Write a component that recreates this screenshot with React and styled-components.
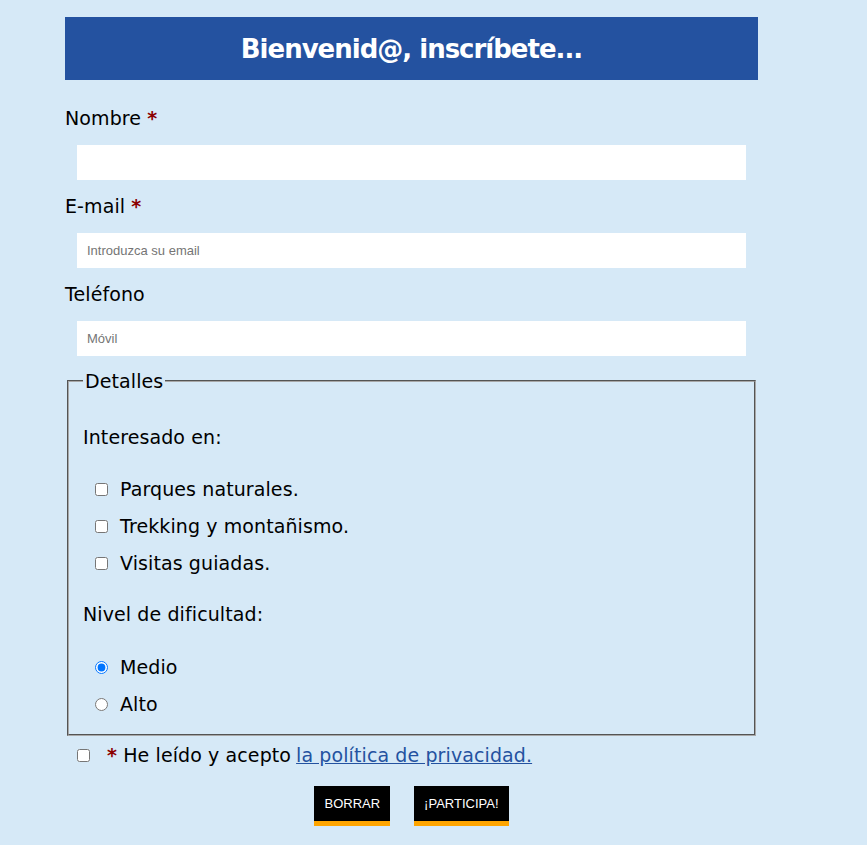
import React from "react";
import styled, { createGlobalStyle } from "styled-components";

const Global = createGlobalStyle`
  html, body { margin: 0; padding: 0; }
  body {
    background: #d6e9f7;
    font-family: "DejaVu Sans", "Open Sans", sans-serif;
    font-size: 19px;
    letter-spacing: 0.1px;
    color: #000;
  }
`;

const Page = styled.div`
  width: 693px;
  margin: 0 0 0 65px;
  padding-top: 17px;
  padding-bottom: 19px;
`;

const Header = styled.h1`
  margin: 0;
  height: 63px;
  background: #2452a0;
  color: #fff;
  display: flex;
  align-items: center;
  justify-content: center;
  font-family: "DejaVu Sans", sans-serif;
  font-weight: 700;
  font-size: 26px;
  letter-spacing: -1px;
`;

const Form = styled.form`
  display: flex;
  flex-direction: column;
`;

const Label = styled.label`
  display: block;
  line-height: 27px;
  margin-top: ${(p) => p.$top}px;
  margin-bottom: 13px;
`;

const Req = styled.span`
  color: #8b0000;
  font-weight: 700;
`;

const Input = styled.input`
  display: block;
  box-sizing: border-box;
  margin: 0 12px;
  width: 669px;
  height: 35px;
  border: none;
  outline: none;
  background: #fff;
  padding: 0 10px;
  font-family: "Liberation Sans", Arial, sans-serif;
  font-size: 13px;
  &::placeholder { color: #757575; }
`;

const Fieldset = styled.fieldset`
  margin: 14px 2px 0;
  padding: 0 12px 0 14px;
  border: 2px groove #a8a8a8;
  height: 366px;
  box-sizing: border-box;
`;

const Legend = styled.legend`
  padding: 0 2px;
  margin-left: 0;
  line-height: 22px;
`;

const Para = styled.p`
  margin: ${(p) => p.$top}px 0 0;
  line-height: 27px;
`;

const OptList = styled.div`
  display: flex;
  flex-direction: column;
  gap: 10px;
  margin-top: ${(p) => p.$top}px;
  padding-left: 12px;
`;

const Opt = styled.label`
  display: flex;
  align-items: center;
  line-height: 27px;
  input {
    margin: 0 12px 0 0;
    width: 13px;
    height: 13px;
  }
`;

const Privacy = styled.div`
  display: flex;
  align-items: center;
  margin-top: 6px;
  padding-left: 12px;
  line-height: 27px;
  input {
    margin: 0 17px 0 0;
    width: 13px;
    height: 13px;
  }
`;

const Link = styled.a`
  color: #2452a0;
  text-decoration: underline;
  margin-left: 5px;
`;

const Buttons = styled.div`
  display: flex;
  justify-content: center;
  gap: 24px;
  margin-top: 17px;
`;

const Button = styled.button`
  height: 40px;
  box-sizing: border-box;
  padding: 0 10px;
  background: #000;
  color: #fff;
  border: none;
  border-bottom: 5px solid #ffa500;
  font-family: "Liberation Sans", Arial, sans-serif;
  font-size: 13px;
  cursor: pointer;
`;

export default function App() {
  return (
    <>
      <Global />
      <Page>
        <Header>Bienvenid@, inscríbete...</Header>
        <Form onSubmit={(e) => e.preventDefault()}>
          <Label $top={25}>
            Nombre <Req>*</Req>
          </Label>
          <Input type="text" />
          <Label $top={13}>
            E-mail <Req>*</Req>
          </Label>
          <Input type="email" placeholder="Introduzca su email" />
          <Label $top={13}>Teléfono</Label>
          <Input type="tel" placeholder="Móvil" />
          <Fieldset>
            <Legend>Detalles</Legend>
            <Para $top={32}>Interesado en:</Para>
            <OptList $top={25}>
              <Opt><input type="checkbox" />Parques naturales.</Opt>
              <Opt><input type="checkbox" />Trekking y montañismo.</Opt>
              <Opt><input type="checkbox" />Visitas guiadas.</Opt>
            </OptList>
            <Para $top={24}>Nivel de dificultad:</Para>
            <OptList $top={26}>
              <Opt><input type="radio" name="nivel" defaultChecked />Medio</Opt>
              <Opt><input type="radio" name="nivel" />Alto</Opt>
            </OptList>
          </Fieldset>
          <Privacy>
            <input type="checkbox" />
            <Req>*</Req>&nbsp;He leído y acepto
            <Link href="#">la política de privacidad.</Link>
          </Privacy>
          <Buttons>
            <Button type="reset">BORRAR</Button>
            <Button type="submit">¡PARTICIPA!</Button>
          </Buttons>
        </Form>
      </Page>
    </>
  );
}
